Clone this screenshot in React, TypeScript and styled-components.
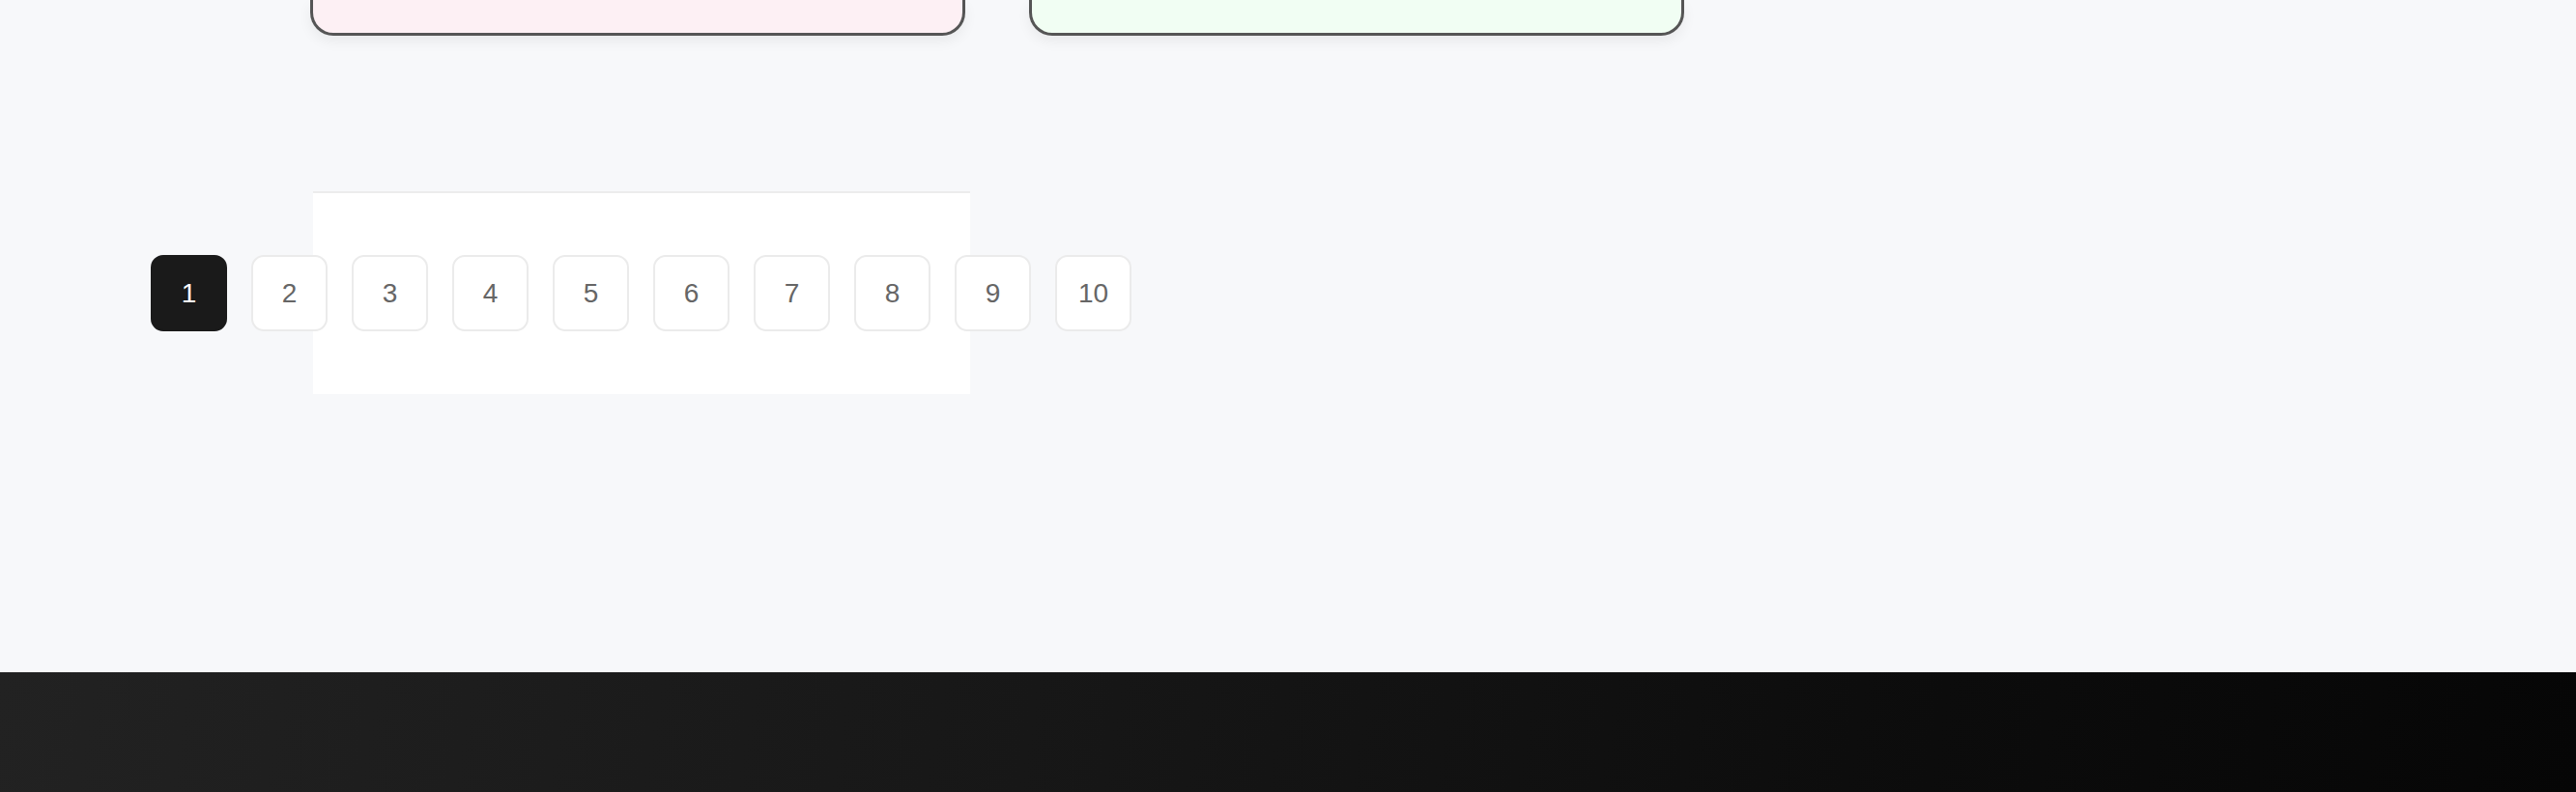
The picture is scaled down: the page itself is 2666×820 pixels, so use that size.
import React from "react";
import styled, { createGlobalStyle } from "styled-components";

const Global = createGlobalStyle`
  html, body { margin: 0; padding: 0; background: #f7f8fa; }
  body { font-family: "Liberation Sans", Arial, sans-serif; overflow: hidden; }
`;

const Page = styled.div`
  width: 2666px;
  min-height: 820px;
  display: flex;
  flex-direction: column;
  background: #f7f8fa;
`;

const CardRow = styled.div`
  display: flex;
  gap: 66px;
  padding-left: 321px;
`;

const Card = styled.div<{ $tint: string }>`
  box-sizing: border-box;
  width: 678px;
  height: 37px;
  background: ${(p) => p.$tint};
  border: 3px solid #555;
  border-top: none;
  border-radius: 0 0 24px 24px;
  box-shadow: 0 6px 14px rgba(0, 0, 0, 0.06);
`;

const Stage = styled.div`
  display: grid;
  margin-top: 161px;
  align-items: center;
`;

const Slide = styled.div`
  grid-area: 1 / 1;
  margin-left: 324px;
  width: 680px;
  height: 208px;
  background: #fff;
  border-top: 2px solid #ececec;
`;

const Pager = styled.div`
  grid-area: 1 / 1;
  margin-left: 156px;
  display: flex;
  gap: 25px;
  align-self: center;
  z-index: 1;
`;

const PageBtn = styled.button<{ $active?: boolean }>`
  width: 79px;
  height: 79px;
  box-sizing: border-box;
  border-radius: 13px;
  border: ${(p) => (p.$active ? "2px solid #1a1a1a" : "2px solid #ebebeb")};
  background: ${(p) => (p.$active ? "#1a1a1a" : "#fff")};
  color: ${(p) => (p.$active ? "#fff" : "#666")};
  font-family: "Liberation Sans", Arial, sans-serif;
  font-size: 28px;
  display: flex;
  align-items: center;
  justify-content: center;
  padding: 2px 0 0;
  cursor: pointer;
`;

const Footer = styled.footer`
  margin-top: 288px;
  height: 124px;
  background: linear-gradient(100deg, #222 0%, #171717 40%, #0c0c0c 75%, #060606 100%);
`;

export default function App() {
  const pages = [1, 2, 3, 4, 5, 6, 7, 8, 9, 10];
  return (
    <Page>
      <Global />
      <CardRow>
        <Card $tint="#fdf0f4" />
        <Card $tint="#f1fef3" />
      </CardRow>
      <Stage>
        <Slide />
        <Pager>
          {pages.map((n) => (
            <PageBtn key={n} $active={n === 1}>
              {n}
            </PageBtn>
          ))}
        </Pager>
      </Stage>
      <Footer />
    </Page>
  );
}
